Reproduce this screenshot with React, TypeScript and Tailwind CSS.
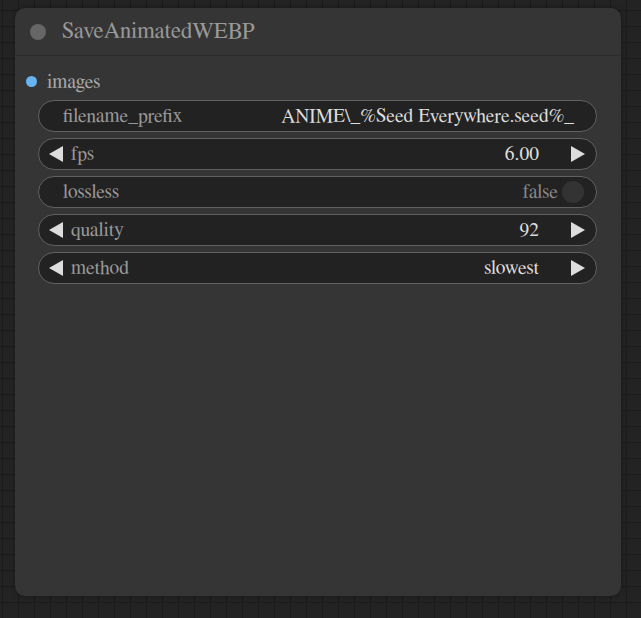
import React from "react";

function LeftArrow() {
  return (
    <svg width="16" height="16" viewBox="0 0 16 16" className="shrink-0">
      <polygon points="15,0 15,16 1,8" fill="#dddddd" />
    </svg>
  );
}

function RightArrow() {
  return (
    <svg width="16" height="16" viewBox="0 0 16 16" className="shrink-0">
      <polygon points="1,0 1,16 15,8" fill="#dddddd" />
    </svg>
  );
}

const Widget = ({ children }: { children: React.ReactNode }) => (
  <div className="flex h-[32px] items-center rounded-full border-[1.5px] border-[#616161] bg-[#222222] pt-[2px] text-[19.5px] leading-none">
    {children}
  </div>
);

const NumberWidget = ({ label, value }: { label: string; value: string }) => (
  <Widget>
    <div className="ml-[9px] -mt-[2px]">
      <LeftArrow />
    </div>
    <span className="ml-[7px] text-[#999999]">{label}</span>
    <span className="ml-auto text-[#dddddd]">{value}</span>
    <div className="ml-[31px] mr-[10px] -mt-[2px]">
      <RightArrow />
    </div>
  </Widget>
);

export default function App() {
  return (
    <div className="h-[618px] w-[641px] overflow-hidden bg-[#232323] bg-[linear-gradient(to_right,#1b1b1b_1px,transparent_1px),linear-gradient(to_bottom,#1b1b1b_1px,transparent_1px)] bg-[size:16px_16px] bg-[position:2px_10px] pt-[8px] pl-[15px] font-[FreeSerif,Noto_Serif,DejaVu_Serif]">
      <div className="flex h-[588px] w-[606px] flex-col rounded-[10px] bg-[#353535] shadow-[0_0_4px_rgba(0,0,0,0.35)]">
        <div className="flex h-[48px] items-center border-b border-[#2b2b2b]">
          <div className="ml-[15px] h-[16px] w-[16px] rounded-full bg-[#666666]" />
          <span className="ml-[16px] pt-[1px] text-[22.7px] text-[#999999]">SaveAnimatedWEBP</span>
        </div>
        <div className="flex items-center pt-[15px]">
          <div className="ml-[11px] h-[11px] w-[11px] rounded-full bg-[#67b4f2]" />
          <span className="ml-[10px] pt-[2px] text-[19.5px] leading-none text-[#aaaaaa]">images</span>
        </div>
        <div className="mt-[7px] ml-[23px] flex w-[559px] flex-col gap-[6px]">
          <Widget>
            <span className="ml-[24px] text-[#999999]">filename_prefix</span>
            <span className="ml-auto mr-[22px] text-[#dddddd]">ANIME\_%Seed Everywhere.seed%_</span>
          </Widget>
          <NumberWidget label="fps" value="6.00" />
          <Widget>
            <span className="ml-[24px] text-[#999999]">lossless</span>
            <span className="ml-auto text-[#888888]">false</span>
            <div className="ml-[4px] mr-[12px] -mt-[2px] h-[22px] w-[22px] rounded-full bg-[#333333]" />
          </Widget>
          <NumberWidget label="quality" value="92" />
          <NumberWidget label="method" value="slowest" />
        </div>
      </div>
    </div>
  );
}
